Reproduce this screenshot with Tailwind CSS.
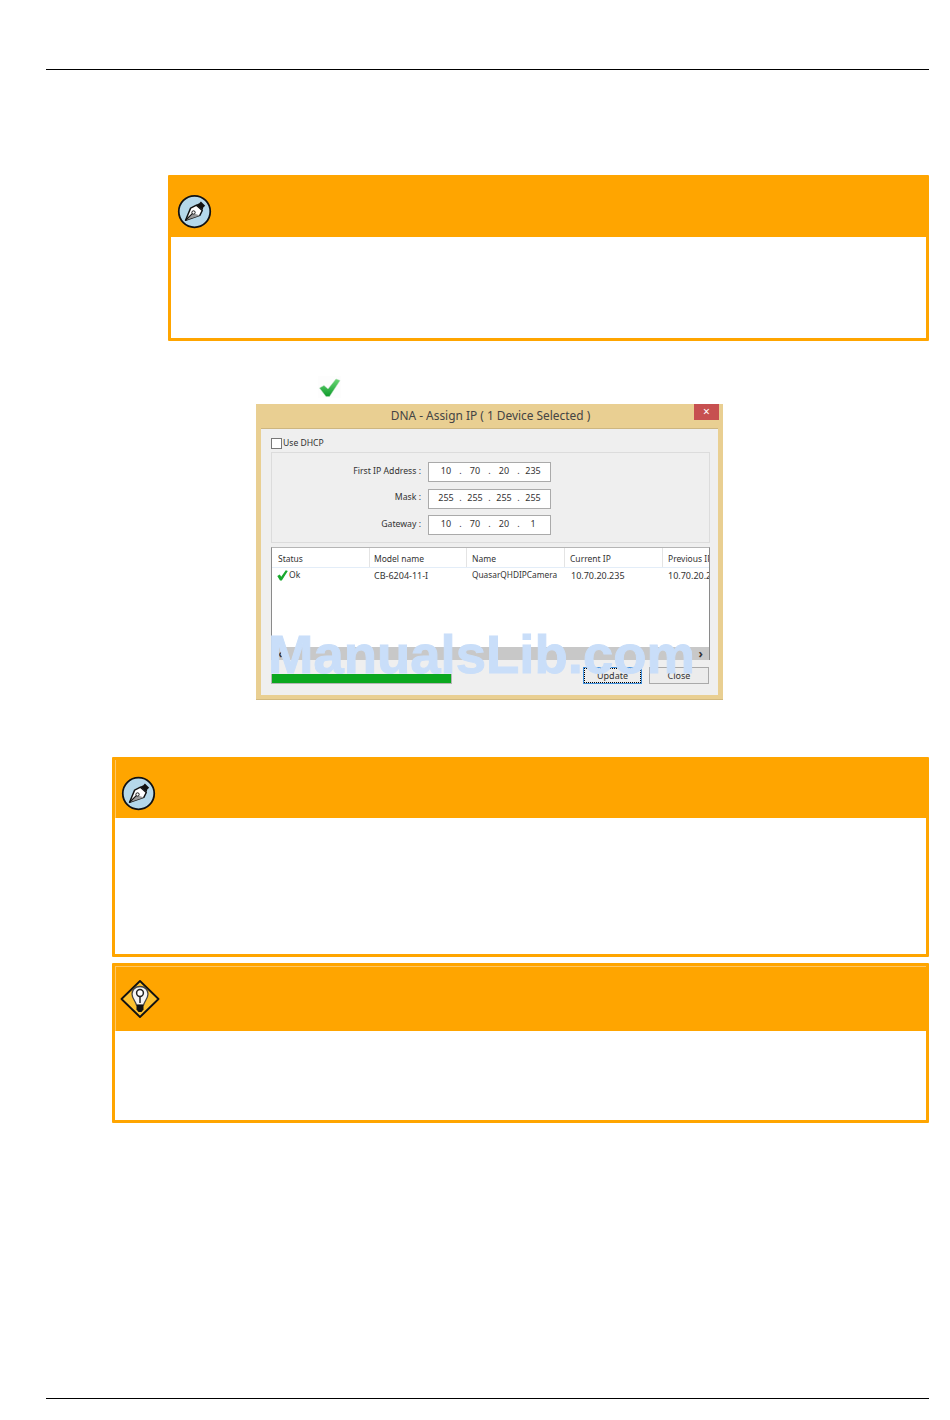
<!DOCTYPE html>
<html lang="en">
<head>
    <meta charset="UTF-8">
    <title>DNA - Assign IP</title>
    <script src="https://cdn.jsdelivr.net/npm/@tailwindcss/browser@4"></script>
</head>
<body class="bg-white">
<div class="w-[950px] h-[1420px] flex flex-col font-['Liberation_Sans',sans-serif]">
    <div class="h-[69px]"></div>
    <div class="h-px bg-black ml-[46px] w-[883px]"></div>

    <!-- first note -->
    <section class="mt-[105px] ml-[168px] w-[761px] h-[166px] border-[3px] border-[#ffa500] rounded-[1px] bg-white">
        <div class="h-[59px] bg-[#ffa500] flex items-center pl-[6px] pt-[8px]">
            <svg class="w-[35px] h-[35px]" viewBox="0 0 36 36">
                <circle cx="18" cy="18" r="16.2" fill="#b5d8ea" stroke="#111" stroke-width="1.8"/>
                <path d="M8.8 27 L14 14.5 L20 11.5 L26 17 L23.5 22 Z" fill="#fff" stroke="#111" stroke-width="1.5" stroke-linejoin="round"/>
                <path d="M8.8 27 L16.5 19.5 L23.5 22 Z" fill="#9a9a9a"/>
                <path d="M8.8 27 L16 20" stroke="#111" stroke-width="1.2"/>
                <circle cx="17" cy="19" r="1.7" fill="#fff" stroke="#111" stroke-width="1"/>
                <path d="M19.7 11 L23 9.5 L24.6 7.7 L29 12 L27 14 L26.5 16.5 Z" fill="#111"/>
            </svg>
        </div>
    </section>

    <!-- check mark above the dialog -->
    <div class="mt-[35px] ml-[318px] w-[23px] h-[22px] bg-[#fdfdfd]">
        <svg class="w-[23px] h-[22px]" viewBox="0 0 23 22">
            <defs>
                <linearGradient id="tick" x1="0" y1="0" x2="0" y2="1">
                    <stop offset="0" stop-color="#6ad874"/>
                    <stop offset="1" stop-color="#0f9a2c"/>
                </linearGradient>
            </defs>
            <path d="M1.5 12 L6 9.5 L10 13 L18 3 L22 4.5 L11.5 20.5 L8 20.5 Z" fill="url(#tick)" stroke="#a9d8b0" stroke-width=".5"/>
        </svg>
    </div>

    <!-- dialog -->
    <div class="relative mt-[6px] ml-[256px] w-[467px] h-[296px] bg-[#e9cf92] border-b border-[#d2b97f] flex flex-col text-[#333] text-[9px] leading-none font-['Noto_Sans',sans-serif]">
        <div class="h-[24px] shrink-0 flex justify-center items-center pl-[2px] text-[11.9px] text-[#444] relative">
            <span>DNA - Assign IP ( 1 Device Selected )</span>
            <div class="absolute right-[4px] top-0 w-[25px] h-[16px] bg-[#c75050] flex items-center justify-center text-white text-[12px]">×</div>
        </div>
        <div class="mx-[5px] h-[267px] bg-[#efefef] border-t border-[#cdb681] pl-[10px] pr-[8px] flex flex-col">
            <div class="h-[23px] flex items-center pt-[5px]">
                <div class="w-[11px] h-[11px] bg-white border border-[#777] mr-px"></div>
                <span class="text-[8.6px] pt-px">Use DHCP</span>
            </div>
            <!-- ip fields -->
            <div class="h-[91px] border border-[#dcdcdc] flex flex-col gap-[7px] pt-[9px]">
                <div class="flex items-center h-[20px]">
                    <span class="w-[149px] text-right text-[8.7px] pb-[2px]">First IP Address :</span>
                    <div class="ml-[7px] w-[123px] h-[20px] bg-white border border-[#aaa] grid grid-cols-[22px_7px_22px_7px_22px_7px_22px] pl-[6px] pb-[3px] items-center text-center">
                        <span>10</span><span>.</span><span>70</span><span>.</span><span>20</span><span>.</span><span>235</span>
                    </div>
                </div>
                <div class="flex items-center h-[20px]">
                    <span class="w-[149px] text-right text-[8.7px] pb-[3px]">Mask :</span>
                    <div class="ml-[7px] w-[123px] h-[20px] bg-white border border-[#aaa] grid grid-cols-[22px_7px_22px_7px_22px_7px_22px] pl-[6px] pb-[4px] items-center text-center">
                        <span>255</span><span>.</span><span>255</span><span>.</span><span>255</span><span>.</span><span>255</span>
                    </div>
                </div>
                <div class="flex items-center h-[20px] -mt-px">
                    <span class="w-[149px] text-right text-[8.7px] pb-[2px]">Gateway :</span>
                    <div class="ml-[7px] w-[123px] h-[20px] bg-white border border-[#aaa] grid grid-cols-[22px_7px_22px_7px_22px_7px_22px] pl-[6px] pb-[3px] items-center text-center">
                        <span>10</span><span>.</span><span>70</span><span>.</span><span>20</span><span>.</span><span>1</span>
                    </div>
                </div>
            </div>
            <!-- device list -->
            <div class="mt-[4px] h-[113px] bg-white border-x border-t border-x-[#8a8a8a] border-t-[#b5b5b5] flex flex-col overflow-hidden">
                <div class="h-[20px] shrink-0 grid grid-cols-[98px_97px_98px_98px_46px] items-center border-b border-[#e3edf8] whitespace-nowrap text-[8.5px]">
                    <span class="pl-[6px] pt-[3px] h-full flex items-center border-r border-[#e4e4e4]">Status</span>
                    <span class="pl-[4px] pt-[3px] h-full flex items-center border-r border-[#e4e4e4]">Model name</span>
                    <span class="pl-[5px] pt-[3px] h-full flex items-center border-r border-[#e4e4e4]">Name</span>
                    <span class="pl-[5px] pt-[3px] h-full flex items-center border-r border-[#e4e4e4]">Current IP</span>
                    <span class="pl-[5px] pt-[3px] h-full flex items-center overflow-hidden">Previous IP</span>
                </div>
                <div class="h-[14px] shrink-0 grid grid-cols-[98px_97px_98px_98px_46px] items-center whitespace-nowrap">
                    <span class="pl-[5px] flex items-center gap-px text-[8.5px]">
                        <svg class="w-[11px] h-[11px]" viewBox="0 0 11 11"><path d="M0.3 6 L2.8 4.5 L4.2 6.8 L8.8 0.3 L10.8 1 L4.8 10.5 L3 10.5 Z" fill="#18a82c"/></svg>
                        Ok
                    </span>
                    <span class="pl-[4px]">CB-6204-11-I</span>
                    <span class="pl-[5px] text-[8.3px]">QuasarQHDIPCamera</span>
                    <span class="pl-[6px]">10.70.20.235</span>
                    <span class="pl-[5px] overflow-hidden">10.70.20.235</span>
                </div>
                <div class="flex-1"></div>
                <div class="h-[13px] shrink-0 bg-[#c8c8c8] flex justify-between items-center px-[6px] text-[12px] font-bold text-[#333]">
                    <span>‹</span><span>›</span>
                </div>
            </div>
            <!-- progress and buttons -->
            <div class="flex mt-[7px] h-[17px]">
                <div class="w-[181px] h-[10px] mt-[7px] bg-[#0aa81f] border-x border-b border-[#b5b5b5]"></div>
                <div class="ml-[131px] w-[59px] h-[17px] bg-[#ececec] border border-[#3f8fdc] outline-1 -outline-offset-2 outline-dotted outline-black flex items-center justify-center">Update</div>
                <div class="ml-[7px] w-[60px] h-[17px] bg-[#ececec] border border-[#aaa] flex items-center justify-center">Close</div>
            </div>
        </div>
        <div class="absolute left-[12px] top-[224px] text-[54.5px] leading-none font-bold text-[#c9def9] [-webkit-text-stroke:1px_#c9def9] whitespace-nowrap font-['Liberation_Sans',sans-serif]">ManualsLib.com</div>
    </div>

    <!-- second note -->
    <section class="mt-[57px] ml-[112px] w-[817px] h-[200px] border-[3px] border-[#ffa500] rounded-[1px] bg-white">
        <div class="h-[58px] bg-[#ffa500] border-l border-[#ffc766] flex items-center pl-[5px] pt-[8px]">
            <svg class="w-[35px] h-[35px]" viewBox="0 0 36 36">
                <circle cx="18" cy="18" r="16.2" fill="#b5d8ea" stroke="#111" stroke-width="1.8"/>
                <path d="M8.8 27 L14 14.5 L20 11.5 L26 17 L23.5 22 Z" fill="#fff" stroke="#111" stroke-width="1.5" stroke-linejoin="round"/>
                <path d="M8.8 27 L16.5 19.5 L23.5 22 Z" fill="#9a9a9a"/>
                <path d="M8.8 27 L16 20" stroke="#111" stroke-width="1.2"/>
                <circle cx="17" cy="19" r="1.7" fill="#fff" stroke="#111" stroke-width="1"/>
                <path d="M19.7 11 L23 9.5 L24.6 7.7 L29 12 L27 14 L26.5 16.5 Z" fill="#111"/>
            </svg>
        </div>
    </section>

    <!-- tip -->
    <section class="mt-[6px] ml-[112px] w-[817px] h-[160px] border-[3px] border-[#ffa500] rounded-[1px] bg-white">
        <div class="h-[65px] bg-[#ffa500] border-l border-t border-[#ffc766] flex items-center pl-[4px]">
            <svg class="w-[40px] h-[38px]" viewBox="0 0 40 38" preserveAspectRatio="none">
                <path d="M20 1 L38.5 19 L20 37 L1.5 19 Z" fill="#fcc02e" stroke="#111" stroke-width="1.8" stroke-linejoin="round"/>
                <path d="M20 6.5 C15 6.5 12 10 12 14 C12 18 15 20.5 16.5 25 L23.5 25 C25 20.5 28 18 28 14 C28 10 25 6.5 20 6.5 Z" fill="#f4f4f4" stroke="#444" stroke-width="1.3"/>
                <circle cx="20" cy="13" r="3.4" fill="#fff" stroke="#222" stroke-width="1.5"/>
                <path d="M20 16.5 L20 23" stroke="#222" stroke-width="1.5"/>
                <path d="M16.5 25 L23.5 25 L23.5 29.5 L21.5 32 L18.5 32 L16.5 29.5 Z" fill="#111"/>
            </svg>
        </div>
    </section>

    <div class="mt-auto mb-[21px] h-px bg-black ml-[46px] w-[883px]"></div>
</div>
</body>
</html>
